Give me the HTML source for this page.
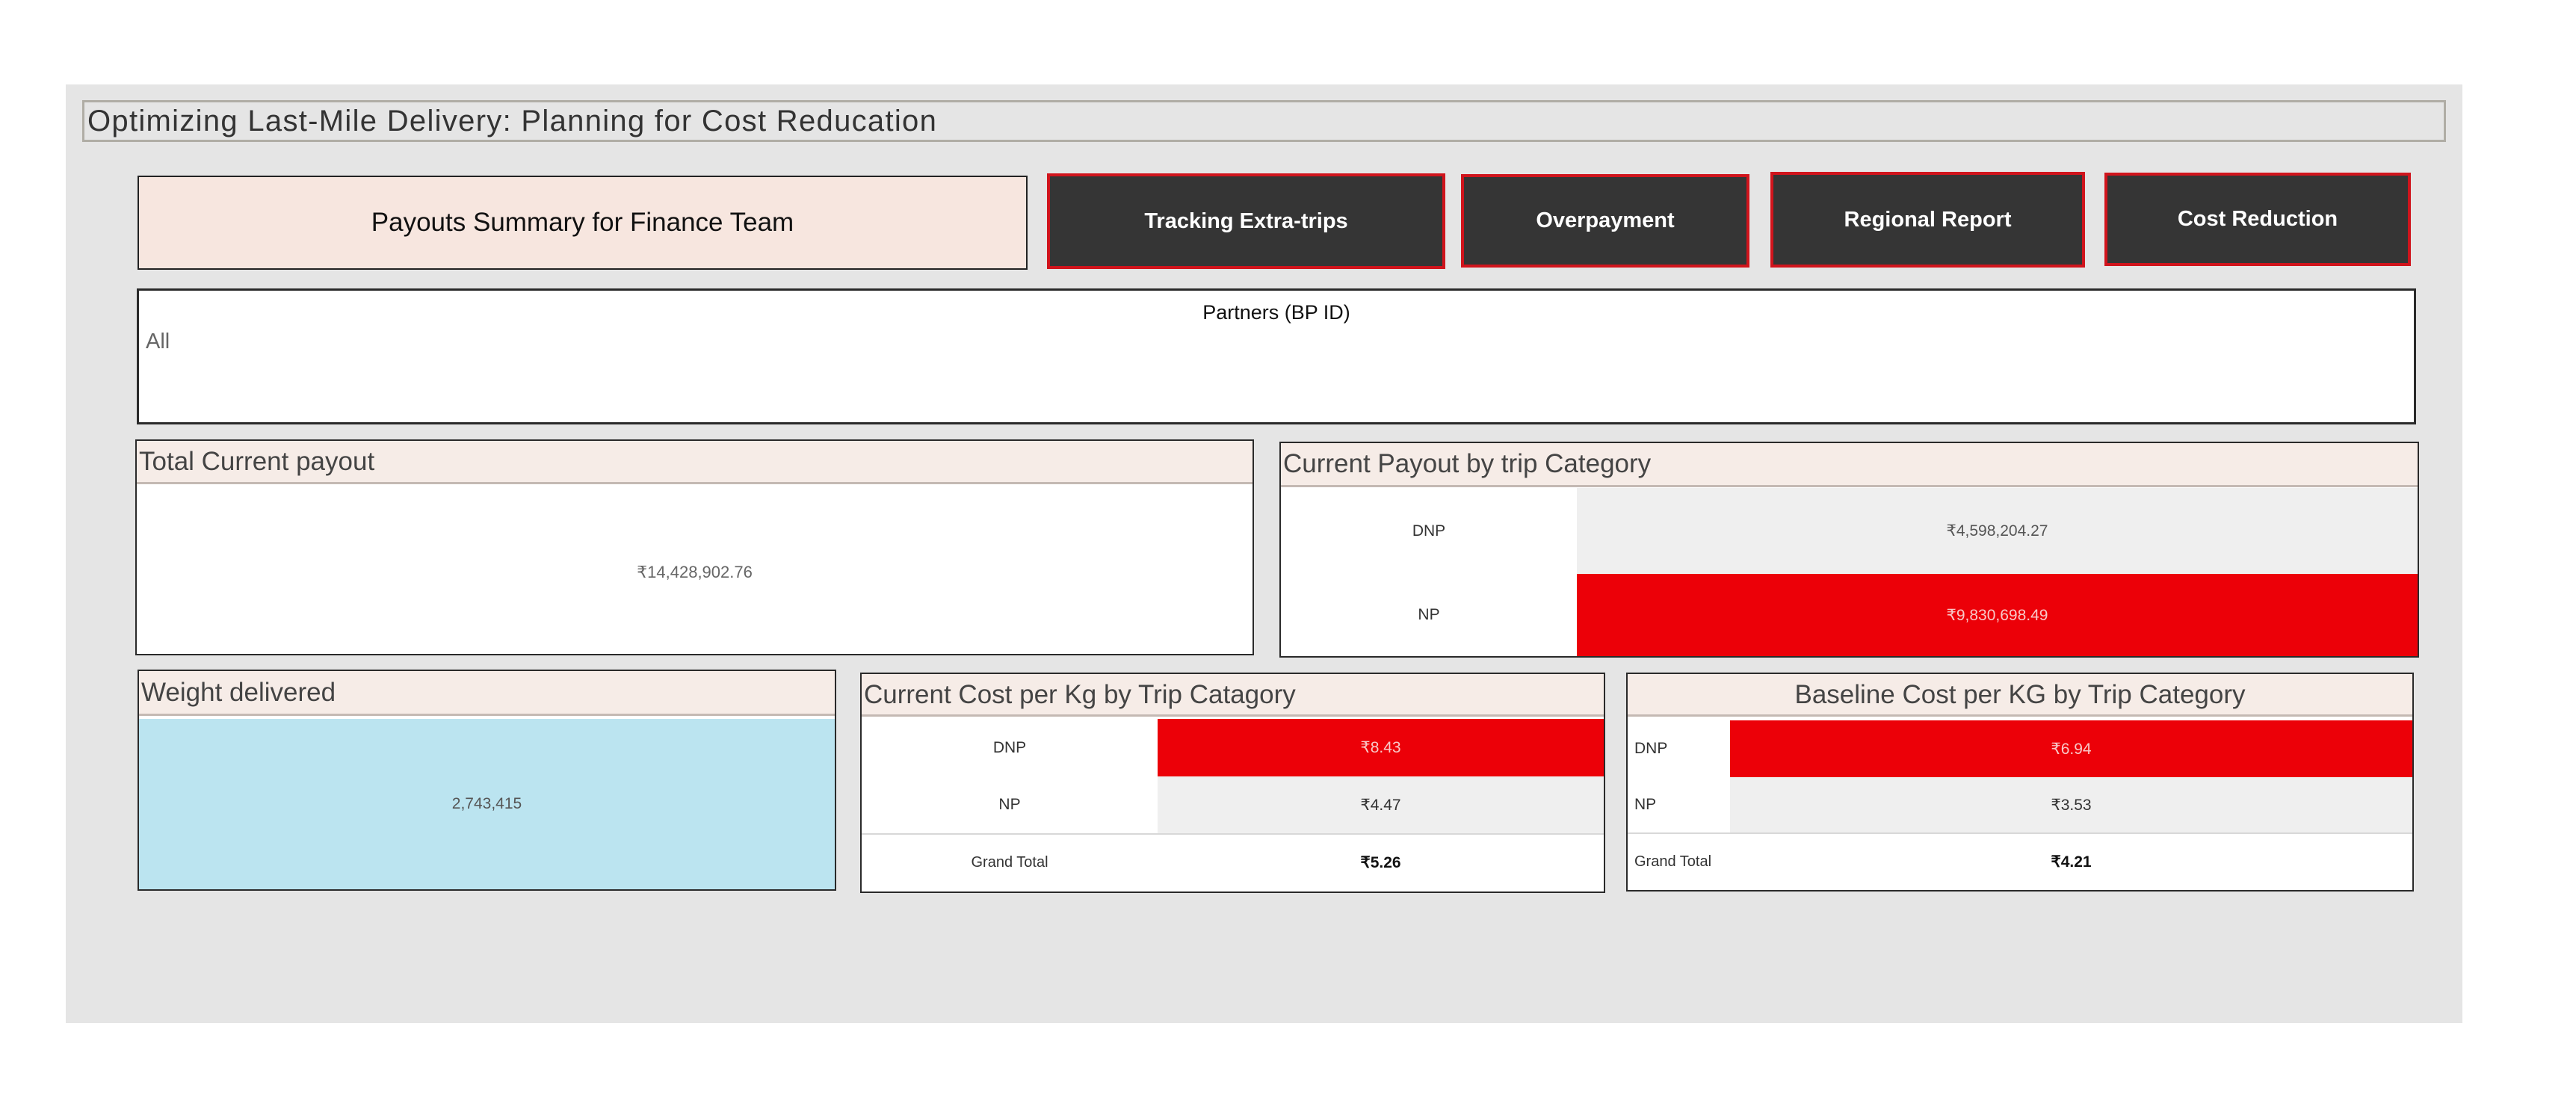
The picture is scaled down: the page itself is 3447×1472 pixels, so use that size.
<!DOCTYPE html>
<html><head><meta charset="utf-8"><style>
*{margin:0;padding:0;box-sizing:border-box}
body{width:3447px;height:1472px;background:#fff;position:relative;font-family:"Liberation Sans",sans-serif;overflow:hidden}
.a{position:absolute}
.bg{left:88px;top:113px;width:3207px;height:1256px;background:#e5e5e5}
.title{left:110px;top:134px;width:3163px;height:56px;border:3px solid #b0ada5;font-size:40px;color:#333;padding-left:4px;line-height:50px;letter-spacing:1.3px}
.btn{background:#353535;border:4px solid #d0141c;color:#fff;font-weight:bold;font-size:29px;display:flex;align-items:center;justify-content:center}
.card{background:#fff;border:2px solid #2a2a2a}
.hdr{position:absolute;left:0;top:0;right:0;background:#f6ece7;border-bottom:3px solid #c4b9b3;font-size:35px;color:#444;padding-left:3px;white-space:nowrap}
.cell{position:absolute;display:flex;align-items:center;justify-content:center;font-size:21px;color:#333}
</style></head><body>
<div class="a bg"></div>
<div class="a title">Optimizing Last-Mile Delivery: Planning for Cost Reducation</div>

<div class="a" style="left:184px;top:235px;width:1191px;height:126px;background:#f7e6df;border:2px solid #222;display:flex;align-items:center;justify-content:center;font-size:35px;color:#111">Payouts Summary for Finance Team</div>
<div class="a btn" style="left:1401px;top:232px;width:533px;height:128px">Tracking Extra-trips</div>
<div class="a btn" style="left:1955px;top:233px;width:386px;height:125px">Overpayment</div>
<div class="a btn" style="left:2369px;top:230px;width:421px;height:128px">Regional Report</div>
<div class="a btn" style="left:2816px;top:231px;width:410px;height:125px">Cost Reduction</div>

<div class="a card" style="left:183px;top:386px;width:3050px;height:182px;border-width:3px">
 <div class="a" style="left:0;right:0;top:14px;text-align:center;font-size:27px;color:#111">Partners (BP ID)</div>
 <div class="a" style="left:9px;top:52px;font-size:29px;color:#666">All</div>
</div>

<div class="a card" style="left:181px;top:588px;width:1497px;height:289px">
 <div class="hdr" style="height:58px;line-height:56px">Total Current payout</div>
 <div class="cell" style="left:0;right:0;top:148px;height:56px;font-size:22px;color:#666">₹14,428,902.76</div>
</div>

<div class="a card" style="left:1712px;top:591px;width:1525px;height:289px">
 <div class="hdr" style="height:59px;line-height:56px">Current Payout by trip Category</div>
 <div class="cell" style="left:0;top:60px;width:396px;height:115px;background:#fff">DNP</div>
 <div class="cell" style="left:396px;right:0;top:60px;height:115px;background:#efefef;color:#555">₹4,598,204.27</div>
 <div class="cell" style="left:0;top:175px;width:396px;height:110px;background:#fff">NP</div>
 <div class="cell" style="left:396px;right:0;top:175px;height:110px;background:#ec0008;color:#f8c8c8">₹9,830,698.49</div>
</div>

<div class="a card" style="left:184px;top:896px;width:935px;height:296px">
 <div class="hdr" style="height:60px;line-height:58px">Weight delivered</div>
 <div class="cell" style="left:0;right:0;top:64px;bottom:0;background:#bbe4f0;color:#555">2,743,415</div>
</div>

<div class="a card" style="left:1151px;top:900px;width:997px;height:295px">
 <div class="hdr" style="height:57px;line-height:56px">Current Cost per Kg by Trip Catagory</div>
 <div class="cell" style="left:0;top:60px;width:396px;height:77px">DNP</div>
 <div class="cell" style="left:396px;right:0;top:60px;height:77px;background:#ec0008;color:#f8c8c8">₹8.43</div>
 <div class="cell" style="left:0;top:137px;width:396px;height:76px">NP</div>
 <div class="cell" style="left:396px;right:0;top:137px;height:76px;background:#efefef">₹4.47</div>
 <div class="a" style="left:0;right:0;top:213px;height:2px;background:#d8d8d8"></div>
 <div class="cell" style="left:0;top:215px;width:396px;height:75px;font-size:20px">Grand Total</div>
 <div class="cell" style="left:396px;right:0;top:215px;height:75px;font-weight:bold;color:#111">₹5.26</div>
</div>

<div class="a card" style="left:2176px;top:900px;width:1054px;height:293px">
 <div class="hdr" style="height:57px;line-height:56px;text-align:center;padding:0">Baseline Cost per KG by Trip Category</div>
 <div class="cell" style="left:0;top:62px;width:137px;height:76px;justify-content:flex-start;padding-left:9px">DNP</div>
 <div class="cell" style="left:137px;right:0;top:62px;height:76px;background:#ec0008;color:#f8c8c8">₹6.94</div>
 <div class="cell" style="left:0;top:138px;width:137px;height:74px;justify-content:flex-start;padding-left:9px">NP</div>
 <div class="cell" style="left:137px;right:0;top:138px;height:74px;background:#efefef">₹3.53</div>
 <div class="a" style="left:0;right:0;top:212px;height:2px;background:#d8d8d8"></div>
 <div class="cell" style="left:0;top:214px;width:137px;height:75px;justify-content:flex-start;padding-left:9px;font-size:20px">Grand Total</div>
 <div class="cell" style="left:137px;right:0;top:214px;height:75px;font-weight:bold;color:#111">₹4.21</div>
</div>
</body></html>
